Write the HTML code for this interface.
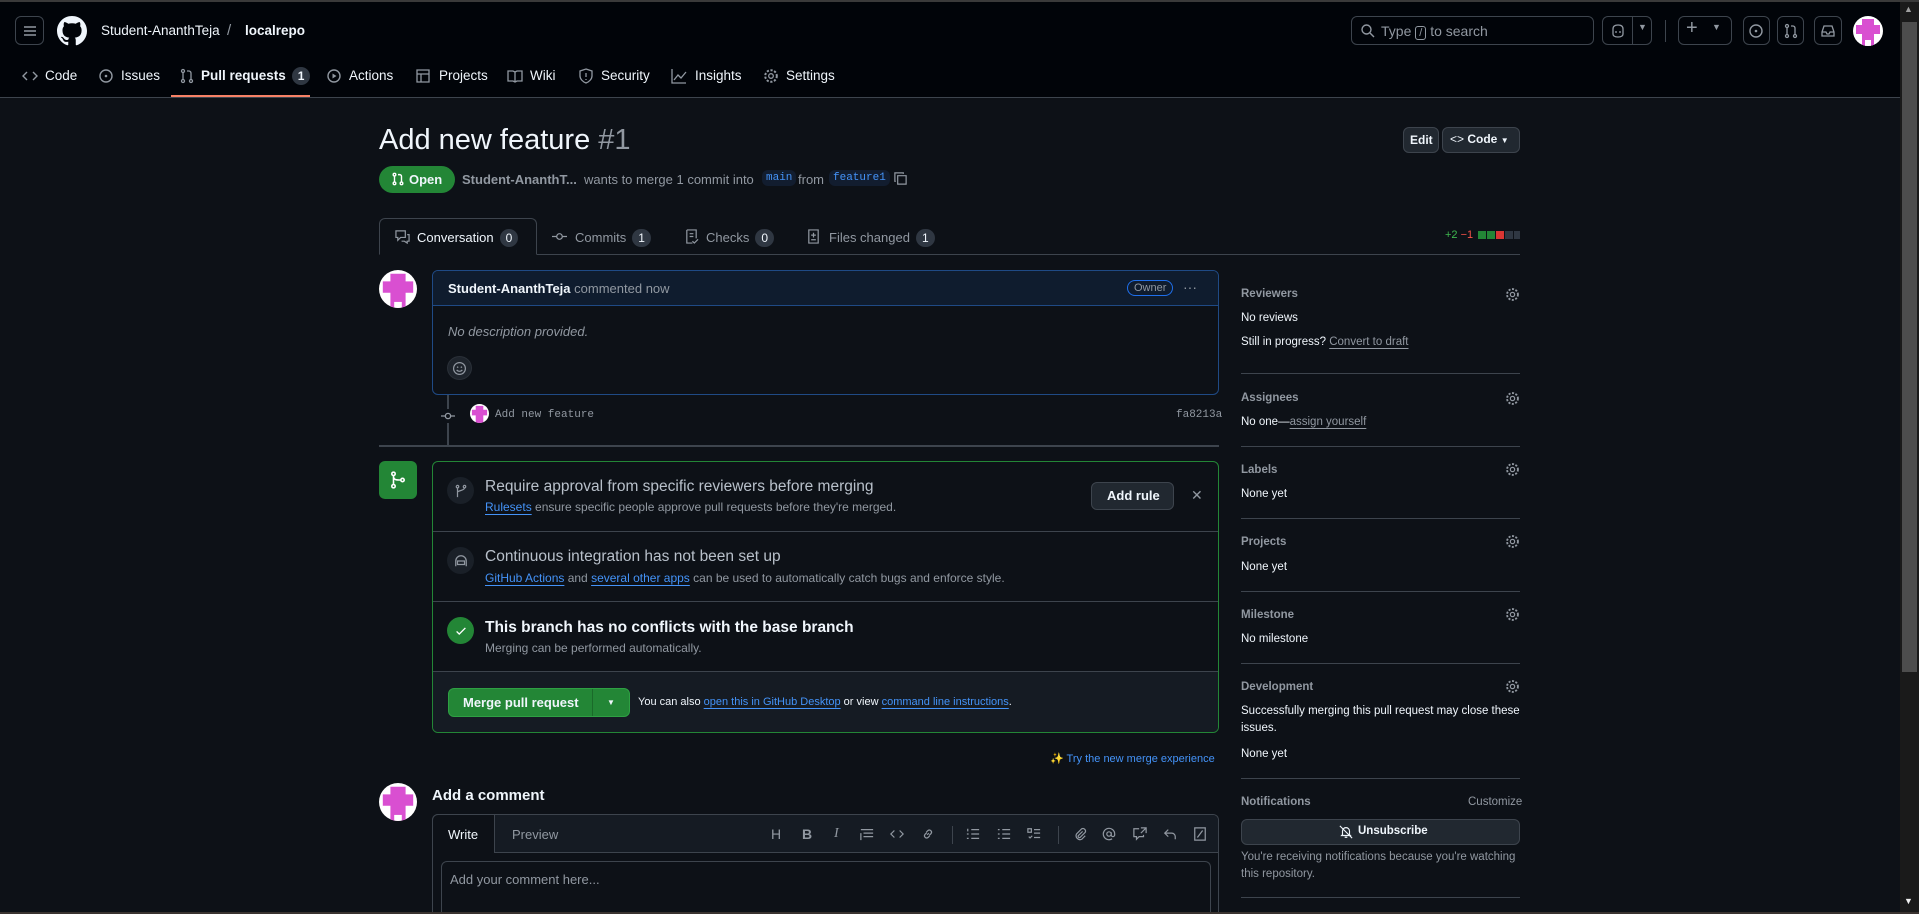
<!DOCTYPE html>
<html style="overflow:hidden;width:1919px;height:914px"><head><meta charset="utf-8"><style>
*{box-sizing:border-box;margin:0;padding:0}
body{width:1919px;height:914px;overflow:hidden;background:#0d1117;font-family:"Liberation Sans",sans-serif;color:#f0f6fc;font-size:14px;position:relative}
.a{position:absolute;white-space:nowrap}
.m{color:#9198a1}
.l{color:#4493f8}
.u{text-decoration:underline;text-underline-offset:3px}
.btn{position:absolute;border:1px solid #3d444d;border-radius:6px;background:#212830}
.hb{position:absolute;border:1px solid #3d444d;border-radius:6px}
.cnt{display:inline-block;background:#2f3742;border-radius:10px;padding:0 6px;font-size:12px;line-height:18px;margin-left:6px;color:#f0f6fc}
svg{position:absolute}
.av{position:absolute;border-radius:50%;background:#fff;overflow:hidden}
.hr{position:absolute;height:1px;background:#3d444d}
.st{font-size:11.5px}
.n{font-size:13.5px}
</style></head><body>
<div class="a" style="left:0;top:0;width:1919px;height:98px;background:#010409;border-top:2px solid #3a3a3a;border-bottom:1px solid #3d444d"></div>
<div class="hb" style="left:15px;top:16px;width:29px;height:29px"></div>
<svg style="left:22px;top:23px" width="16" height="16" viewBox="0 0 16 16"><path d="M2 4h12M2 8h12M2 12h12" stroke="#9198a1" stroke-width="1.5"/></svg>
<svg style="left:57px;top:16px" width="30" height="30" viewBox="0 0 16 16"><path fill="#f0f6fc" d="M8 0C3.58 0 0 3.58 0 8c0 3.54 2.29 6.530 5.47 7.59.4.07.55-.17.55-.38 0-.19-.01-.82-.01-1.49-2.01.37-2.53-.49-2.69-.94-.09-.23-.48-.94-.82-1.130-.28-.15-.68-.52-.01-.53.63-.01 1.08.58 1.230.82.72 1.21 1.87.87 2.33.66.07-.52.28-.87.51-1.070-1.78-.2-3.64-.89-3.64-3.95 0-.87.31-1.59.82-2.15-.08-.2-.36-1.02.08-2.12 0 0 .67-.21 2.2.82.64-.18 1.32-.27 2-.27.68 0 1.36.09 2 .27 1.53-1.04 2.2-.82 2.2-.82.44 1.1.16 1.92.08 2.12.51.56.82 1.27.82 2.15 0 3.07-1.87 3.75-3.65 3.95.29.25.54.73.54 1.48 0 1.07-.01 1.93-.01 2.2 0 .21.15.46.55.38A8.013 8.013 0 0016 8c0-4.42-3.58-8-8-8z"/></svg>
<div class="a" style="left:101px;top:23px;font-size:13.5px">Student-AnanthTeja</div>
<div class="a m" style="left:227px;top:22px;font-size:15px">/</div>
<div class="a" style="left:245px;top:23px;font-weight:bold;font-size:13.5px">localrepo</div>
<div class="hb" style="left:1351px;top:16px;width:243px;height:29px"></div>
<svg style="left:1360px;top:23px" width="16" height="16" viewBox="0 0 16 16"><circle cx="6.5" cy="6.5" r="4.5" stroke="#9198a1" stroke-width="1.4" fill="none"/><path d="M10 10l4 4" stroke="#9198a1" stroke-width="1.4"/></svg>
<div class="a m" style="left:1381px;top:23px;font-size:14px">Type <span style="border:1px solid #9198a1;border-radius:3px;padding:0 3px;font-size:11px">/</span> to search</div>
<div class="hb" style="left:1602px;top:16px;width:50px;height:29px"></div>
<div class="a" style="left:1632px;top:17px;width:1px;height:27px;background:#3d444d"></div>
<svg style="left:1610px;top:23px" width="16" height="16" viewBox="0 0 16 16"><path d="M3 6c0-3 2-4 5-4s5 1 5 4v5c0 2-2 3-5 3s-5-1-5-3z M6 8v2M10 8v2" stroke="#9198a1" stroke-width="1.3" fill="none"/></svg>
<div class="a m" style="left:1638px;top:22px;font-size:9px">▼</div>
<div class="a" style="left:1665px;top:20px;width:1px;height:22px;background:#3d444d"></div>
<div class="hb" style="left:1678px;top:16px;width:54px;height:29px"></div>
<div class="a m" style="left:1686px;top:17px;font-size:20px">+</div>
<div class="a m" style="left:1712px;top:22px;font-size:9px">▼</div>
<div class="hb" style="left:1743px;top:16px;width:27px;height:29px"></div>
<svg style="left:1748px;top:23px" width="16" height="16" viewBox="0 0 16 16"><circle cx="8" cy="8" r="6" stroke="#9198a1" stroke-width="1.4" fill="none"/><circle cx="8" cy="8" r="1.3" fill="#9198a1"/></svg>
<div class="hb" style="left:1777px;top:16px;width:27px;height:29px"></div>
<svg style="left:1783px;top:23px" width="16" height="16" viewBox="0 0 16 16"><g stroke="#9198a1" stroke-width="1.3" fill="none"><circle cx="4" cy="3" r="1.5"/><circle cx="4" cy="13" r="1.5"/><circle cx="12" cy="13" r="1.5"/><path d="M4 4.5v7M12 11.5V5c0-1-1-2-2-2H8"/></g></svg>
<div class="hb" style="left:1814px;top:16px;width:28px;height:29px"></div>
<svg style="left:1820px;top:23px" width="16" height="16" viewBox="0 0 16 16"><path d="M2 9l2-6h8l2 6v4H2zM2 9h4l1 2h2l1-2h4" stroke="#9198a1" stroke-width="1.3" fill="none"/></svg>
<div class="av" style="left:1853px;top:16px;width:30px;height:30px"><svg style="left:0;top:0" width="30" height="30" viewBox="0 0 10 10"><path d="M3 1h4v2h2v3H7v4H3V6H1V3h2z" fill="#d94fd1"/><rect x="4" y="8" width="2" height="2" fill="#fff"/></svg></div>
<svg style="left:22px;top:68px" width="16" height="16" viewBox="0 0 16 16"><path d="M5 4L1 8l4 4M11 4l4 4-4 4" stroke="#9198a1" stroke-width="1.4" fill="none"/></svg>
<div class="a n" style="left:45px;top:68px">Code</div>
<svg style="left:98px;top:68px" width="16" height="16" viewBox="0 0 16 16"><circle cx="8" cy="8" r="6" stroke="#9198a1" stroke-width="1.4" fill="none"/><circle cx="8" cy="8" r="1.3" fill="#9198a1"/></svg>
<div class="a n" style="left:121px;top:68px">Issues</div>
<svg style="left:179px;top:68px" width="16" height="16" viewBox="0 0 16 16"><g stroke="#9198a1" stroke-width="1.3" fill="none"><circle cx="4" cy="3" r="1.5"/><circle cx="4" cy="13" r="1.5"/><circle cx="12" cy="13" r="1.5"/><path d="M4 4.5v7M12 11.5V5c0-1-1-2-2-2H8"/></g></svg>
<div class="a n" style="left:201px;top:67px;font-weight:bold">Pull requests<span class="cnt">1</span></div>
<div class="a" style="left:171px;top:95px;width:139px;height:2px;background:#f78166"></div>
<svg style="left:326px;top:68px" width="16" height="16" viewBox="0 0 16 16"><circle cx="8" cy="8" r="6" stroke="#9198a1" stroke-width="1.4" fill="none"/><path d="M6.5 5.5v5l4-2.5z" fill="#9198a1"/></svg>
<div class="a n" style="left:349px;top:68px">Actions</div>
<svg style="left:415px;top:68px" width="16" height="16" viewBox="0 0 16 16"><path d="M2 2h12v12H2zM2 6h12M6 6v8" stroke="#9198a1" stroke-width="1.3" fill="none"/></svg>
<div class="a n" style="left:439px;top:68px">Projects</div>
<svg style="left:507px;top:68px" width="16" height="16" viewBox="0 0 16 16"><path d="M1 3h5l2 1 2-1h5v10h-5l-2 1-2-1H1zM8 4v10" stroke="#9198a1" stroke-width="1.3" fill="none"/></svg>
<div class="a n" style="left:530px;top:68px">Wiki</div>
<svg style="left:578px;top:68px" width="16" height="16" viewBox="0 0 16 16"><path d="M8 1l6 2v5c0 3-3 6-6 7-3-1-6-4-6-7V3zM8 5v4M8 11v1" stroke="#9198a1" stroke-width="1.3" fill="none"/></svg>
<div class="a n" style="left:601px;top:68px">Security</div>
<svg style="left:671px;top:68px" width="16" height="16" viewBox="0 0 16 16"><path d="M1 1v14h14M3 12l4-5 3 3 5-6" stroke="#9198a1" stroke-width="1.3" fill="none"/></svg>
<div class="a n" style="left:695px;top:68px">Insights</div>
<svg style="left:763px;top:68px" width="16" height="16" viewBox="0 0 16 16"><circle cx="8" cy="8" r="2.3" stroke="#9198a1" stroke-width="1.3" fill="none"/><circle cx="8" cy="8" r="5.8" stroke="#9198a1" stroke-width="2" stroke-dasharray="2.2 1.6" fill="none"/></svg>
<div class="a n" style="left:786px;top:68px">Settings</div>
<div class="a" style="left:1900px;top:2px;width:19px;height:910px;background:#1a1a1a"></div>
<div class="a" style="left:1902px;top:22px;width:15px;height:650px;background:#4d4d4d"></div>
<div class="a" style="left:1904px;top:4px;font-size:9px;color:#a0a0a0">▲</div>
<div class="a" style="left:1904px;top:896px;font-size:9px;color:#f0f0f0">▼</div>
<div class="a" style="left:379px;top:124px;font-size:29px">Add new feature <span class="m" style="font-weight:300">#1</span></div>
<div class="btn" style="left:1403px;top:127px;width:36px;height:26px"></div>
<div class="a" style="left:1410px;top:133px;font-size:12px;font-weight:bold">Edit</div>
<div class="btn" style="left:1442px;top:127px;width:78px;height:26px"></div>
<div class="a" style="left:1450px;top:132px;font-size:12px;font-weight:bold"><span style="font-weight:normal">&lt;&gt;</span> Code <span style="font-size:8px">▼</span></div>
<div class="a" style="left:379px;top:166px;width:76px;height:27px;background:#238636;border-radius:14px"></div>
<svg style="left:391px;top:172px" width="14" height="14" viewBox="0 0 16 16"><g stroke="#fff" stroke-width="1.6" fill="none"><circle cx="4" cy="3" r="1.5"/><circle cx="4" cy="13" r="1.5"/><circle cx="12" cy="13" r="1.5"/><path d="M4 4.5v7M12 11.5V5c0-1-1-2-2-2H8"/></g></svg>
<div class="a" style="left:409px;top:172px;font-weight:bold;font-size:13px">Open</div>
<div class="a m" style="left:462px;top:172px;font-size:13px"><b>Student-AnanthT...</b></div>
<div class="a m" style="left:584px;top:172px;font-size:13px">wants to merge 1 commit into</div>
<div class="a l" style="left:762px;top:170px;padding:2px 4px;background:#121d2f;border-radius:6px;font-family:'Liberation Mono',monospace;font-size:11px">main</div>
<div class="a m" style="left:798px;top:172px;font-size:13px">from</div>
<div class="a l" style="left:829px;top:170px;padding:2px 4px;background:#121d2f;border-radius:6px;font-family:'Liberation Mono',monospace;font-size:11px">feature1</div>
<svg style="left:893px;top:171px" width="15" height="15" viewBox="0 0 16 16"><path d="M5 5h9v9H5zM3 11H2V2h9v1" stroke="#9198a1" stroke-width="1.3" fill="none"/></svg>
<div class="hr" style="left:379px;top:254px;width:1141px"></div>
<div class="a" style="left:379px;top:218px;width:158px;height:37px;border:1px solid #3d444d;border-bottom:1px solid #0d1117;border-radius:6px 6px 0 0;background:#0d1117"></div>
<svg style="left:395px;top:229px" width="15" height="15" viewBox="0 0 16 16"><path d="M1 2h10v7H6l-3 3V9H1zM13 6h2v7h-2v2l-3-2H7" stroke="#9198a1" stroke-width="1.3" fill="none"/></svg>
<div class="a" style="left:417px;top:229px;font-size:13px">Conversation<span class="cnt">0</span></div>
<svg style="left:552px;top:229px" width="15" height="15" viewBox="0 0 16 16"><circle cx="8" cy="8" r="3" stroke="#9198a1" stroke-width="1.3" fill="none"/><path d="M0 8h5M11 8h5" stroke="#9198a1" stroke-width="1.3"/></svg>
<div class="a m" style="left:575px;top:229px;font-size:13px">Commits<span class="cnt m">1</span></div>
<svg style="left:684px;top:229px" width="15" height="15" viewBox="0 0 16 16"><path d="M3 1h10v9M3 1v14h6M6 5h4M6 8h4M9 13l2 2 4-4" stroke="#9198a1" stroke-width="1.3" fill="none"/></svg>
<div class="a m" style="left:706px;top:229px;font-size:13px">Checks<span class="cnt m">0</span></div>
<svg style="left:806px;top:229px" width="15" height="15" viewBox="0 0 16 16"><path d="M3 1h10v14H3zM8 4v5M5.5 6.5h5M5.5 11.5h5" stroke="#9198a1" stroke-width="1.3" fill="none"/></svg>
<div class="a m" style="left:829px;top:229px;font-size:13px">Files changed<span class="cnt m">1</span></div>
<div class="a" style="left:1445px;top:229px;font-size:11px"><span style="color:#3fb950">+2</span> <span style="color:#f85149">−1</span></div>
<div class="a" style="left:1478px;top:231px;width:8px;height:8px;background:#238636"></div>
<div class="a" style="left:1487px;top:231px;width:8px;height:8px;background:#238636"></div>
<div class="a" style="left:1496px;top:231px;width:8px;height:8px;background:#da3633"></div>
<div class="a" style="left:1505px;top:231px;width:8px;height:8px;background:#2f3742"></div>
<div class="a" style="left:1514px;top:231px;width:6px;height:8px;background:#2f3742"></div>
<div class="av" style="left:379px;top:270px;width:38px;height:38px"><svg style="left:0;top:0" width="38" height="38" viewBox="0 0 10 10"><path d="M3 1h4v2h2v3H7v4H3V6H1V3h2z" fill="#d94fd1"/><rect x="4" y="8.4" width="2" height="2" fill="#fff"/></svg></div>
<div class="a" style="left:432px;top:270px;width:787px;height:125px;border:1px solid #1f4a85;border-radius:6px;overflow:hidden">
<div style="height:35px;background:#0f1c2e;border-bottom:1px solid #1f4a85"></div></div>
<div class="a" style="left:448px;top:281px;font-size:13px"><b>Student-AnanthTeja</b> <span class="m">commented now</span></div>
<div class="a m" style="left:1127px;top:280px;font-size:11px;border:1px solid #1f6feb;border-radius:10px;padding:1px 6px">Owner</div>
<div class="a m" style="left:1183px;top:279px;font-size:14px">···</div>
<div class="a m" style="left:448px;top:324px;font-size:13px;font-style:italic">No description provided.</div>
<div class="a" style="left:447px;top:356px;width:25px;height:24px;border-radius:50%;background:#1e242c;border:1px solid #2a3038"></div>
<svg style="left:452px;top:361px" width="15" height="15" viewBox="0 0 16 16"><circle cx="8" cy="8" r="6.3" stroke="#9198a1" stroke-width="1.3" fill="none"/><path d="M5 9.5c1.5 2 4.5 2 6 0" stroke="#9198a1" stroke-width="1.3" fill="none"/><circle cx="6" cy="6.5" r=".8" fill="#9198a1"/><circle cx="10" cy="6.5" r=".8" fill="#9198a1"/></svg>
<div class="a" style="left:447px;top:395px;width:2px;height:51px;background:#3d444d"></div>
<div class="a" style="left:441px;top:409px;width:14px;height:14px;background:#0d1117"></div>
<svg style="left:441px;top:409px" width="14" height="14" viewBox="0 0 16 16"><circle cx="8" cy="8" r="3" stroke="#9198a1" stroke-width="1.5" fill="none"/><path d="M0 8h5M11 8h5" stroke="#9198a1" stroke-width="1.5"/></svg>
<div class="av" style="left:470px;top:404px;width:19px;height:19px"><svg style="left:0;top:0" width="19" height="19" viewBox="0 0 10 10"><path d="M3 1h4v2h2v3H7v4H3V6H1V3h2z" fill="#d94fd1"/></svg></div>
<div class="a m" style="left:495px;top:409px;font-family:'Liberation Mono',monospace;font-size:11px">Add new feature</div>
<div class="a m" style="left:1176px;top:409px;font-family:'Liberation Mono',monospace;font-size:11px">fa8213a</div>
<div class="hr" style="left:379px;top:445px;width:840px;height:2px"></div>
<div class="a" style="left:379px;top:461px;width:38px;height:38px;background:#238636;border-radius:6px"></div>
<svg style="left:389px;top:471px" width="18" height="18" viewBox="0 0 16 16"><g stroke="#fff" stroke-width="1.4" fill="none"><circle cx="4" cy="2.5" r="1.5"/><circle cx="4" cy="13.5" r="1.5"/><circle cx="12" cy="8" r="1.5"/><path d="M4 4v8M4 5c0 3 3 3 6.5 3"/></g></svg>
<div class="a" style="left:432px;top:461px;width:787px;height:272px;border:1px solid #238636;border-radius:6px;overflow:hidden">
<div style="height:70px;border-bottom:1px solid #3d444d"></div>
<div style="height:70px;border-bottom:1px solid #3d444d"></div>
<div style="height:70px;border-bottom:1px solid #3d444d"></div>
<div style="height:70px;background:#151b23"></div></div>
<div class="a" style="left:447px;top:477px;width:27px;height:27px;border-radius:50%;background:#1a2028"></div>
<svg style="left:454px;top:484px" width="14" height="14" viewBox="0 0 16 16"><g stroke="#9198a1" stroke-width="1.4" fill="none"><circle cx="4" cy="3" r="1.4"/><circle cx="12" cy="3" r="1.4"/><path d="M4 4.5V15M12 4.5c0 3-8 3-8 5"/></g></svg>
<div class="a" style="left:485px;top:478px;font-size:15.5px;color:#b8c0ca">Require approval from specific reviewers before merging</div>
<div class="a m" style="left:485px;top:500px;font-size:12px"><span class="l u">Rulesets</span> ensure specific people approve pull requests before they're merged.</div>
<div class="btn" style="left:1091px;top:482px;width:83px;height:28px"></div>
<div class="a" style="left:1107px;top:488px;font-size:13px;font-weight:bold">Add rule</div>
<div class="a m" style="left:1191px;top:487px;font-size:14px">✕</div>
<div class="a" style="left:447px;top:547px;width:27px;height:27px;border-radius:50%;background:#1a2028"></div>
<svg style="left:454px;top:554px" width="14" height="14" viewBox="0 0 16 16"><path d="M2 14V8a6 6 0 0112 0v6M4 8h8v4H4zM6 10h.1M10 10h.1" stroke="#9198a1" stroke-width="1.4" fill="none"/></svg>
<div class="a" style="left:485px;top:548px;font-size:15.5px;color:#b8c0ca">Continuous integration has not been set up</div>
<div class="a m" style="left:485px;top:571px;font-size:12px"><span class="l u">GitHub Actions</span> and <span class="l u">several other apps</span> can be used to automatically catch bugs and enforce style.</div>
<div class="a" style="left:447px;top:617px;width:27px;height:27px;border-radius:50%;background:#238636"></div>
<svg style="left:454px;top:624px" width="14" height="14" viewBox="0 0 16 16"><path d="M3 8.5l3 3 7-7" stroke="#fff" stroke-width="1.6" fill="none"/></svg>
<div class="a" style="left:485px;top:619px;font-size:15.5px;font-weight:bold">This branch has no conflicts with the base branch</div>
<div class="a m" style="left:485px;top:641px;font-size:12px">Merging can be performed automatically.</div>
<div class="a" style="left:448px;top:688px;width:182px;height:29px;background:#238636;border-radius:6px;border:1px solid #2ea043"></div>
<div class="a" style="left:592px;top:689px;width:1px;height:27px;background:#1a6a2a"></div>
<div class="a" style="left:463px;top:695px;font-size:13px;font-weight:bold">Merge pull request</div>
<div class="a" style="left:607px;top:698px;font-size:8px">▼</div>
<div class="a" style="left:638px;top:696px;font-size:11px">You can also <span class="l u">open this in GitHub Desktop</span> or view <span class="l u">command line instructions</span>.</div>
<div class="a l" style="left:1050px;top:752px;font-size:11px"><span style="color:#e3b341">✨</span> Try the new merge experience</div>
<div class="av" style="left:379px;top:783px;width:38px;height:38px"><svg style="left:0;top:0" width="38" height="38" viewBox="0 0 10 10"><path d="M3 1h4v2h2v3H7v4H3V6H1V3h2z" fill="#d94fd1"/><rect x="4" y="8.4" width="2" height="2" fill="#fff"/></svg></div>
<div class="a" style="left:432px;top:787px;font-size:15px;font-weight:bold">Add a comment</div>
<div class="a" style="left:432px;top:814px;width:787px;height:100px;border:1px solid #3d444d;border-bottom:none;border-radius:6px 6px 0 0;overflow:hidden;background:#0d1117"><div style="height:38px;background:#151b23;border-bottom:1px solid #3d444d"></div></div>
<div class="a" style="left:432px;top:814px;width:63px;height:39px;border:1px solid #3d444d;border-bottom:none;border-radius:6px 0 0 0;background:#0d1117"></div>
<div class="a" style="left:448px;top:827px;font-size:13px">Write</div>
<div class="a m" style="left:512px;top:827px;font-size:13px">Preview</div>
<div class="a m" style="left:771px;top:826px;font-size:14px">H</div>
<div class="a m" style="left:802px;top:826px;font-size:14px;font-weight:bold">B</div>
<div class="a m" style="left:834px;top:826px;font-size:14px;font-style:italic;font-family:'Liberation Serif',serif">I</div>
<svg style="left:860px;top:827px" width="14" height="14" viewBox="0 0 16 16"><path d="M1 3h14M4 7h11M4 11h11M1 7v8" stroke="#9198a1" stroke-width="1.4" fill="none"/></svg>
<svg style="left:890px;top:827px" width="14" height="14" viewBox="0 0 16 16"><path d="M5 4L1 8l4 4M11 4l4 4-4 4" stroke="#9198a1" stroke-width="1.4" fill="none"/></svg>
<svg style="left:921px;top:827px" width="14" height="14" viewBox="0 0 16 16"><path d="M7 9l2-2M6 6l2-2a2.5 2.5 0 013.5 3.5l-2 2M10 10l-2 2a2.5 2.5 0 01-3.5-3.5l2-2" stroke="#9198a1" stroke-width="1.4" fill="none"/></svg>
<div class="a" style="left:952px;top:826px;width:1px;height:18px;background:#3d444d"></div>
<svg style="left:966px;top:827px" width="14" height="14" viewBox="0 0 16 16"><path d="M6 3h9M6 8h9M6 13h9M2 2v3M1 8h2M1 13h2" stroke="#9198a1" stroke-width="1.4" fill="none"/></svg>
<svg style="left:997px;top:827px" width="14" height="14" viewBox="0 0 16 16"><path d="M6 3h9M6 8h9M6 13h9M1 3h2M1 8h2M1 13h2" stroke="#9198a1" stroke-width="1.4" fill="none"/></svg>
<svg style="left:1027px;top:827px" width="14" height="14" viewBox="0 0 16 16"><path d="M1 2h4v4H1zM8 3h7M8 7h7M2 11l1.5 1.5L6 10M8 12h7" stroke="#9198a1" stroke-width="1.4" fill="none"/></svg>
<div class="a" style="left:1058px;top:826px;width:1px;height:18px;background:#3d444d"></div>
<svg style="left:1073px;top:827px" width="14" height="14" viewBox="0 0 16 16"><path d="M11 5l-5 5a1.5 1.5 0 002 2l6-6a3 3 0 00-4-4L4 8a4.5 4.5 0 006 6l4-4" stroke="#9198a1" stroke-width="1.4" fill="none"/></svg>
<svg style="left:1102px;top:827px" width="14" height="14" viewBox="0 0 16 16"><circle cx="8" cy="8" r="2.5" stroke="#9198a1" stroke-width="1.4" fill="none"/><path d="M10.5 6v3a2 2 0 004 0V8a6.5 6.5 0 10-3 5.5" stroke="#9198a1" stroke-width="1.4" fill="none"/></svg>
<svg style="left:1133px;top:827px" width="14" height="14" viewBox="0 0 16 16"><path d="M9 1h6v6M15 1l-6 6M7 2H1v9h3v3l3-3h5V9" stroke="#9198a1" stroke-width="1.4" fill="none"/></svg>
<svg style="left:1163px;top:827px" width="14" height="14" viewBox="0 0 16 16"><path d="M6 3L2 7l4 4M2 7h8a4 4 0 014 4v3" stroke="#9198a1" stroke-width="1.4" fill="none"/></svg>
<svg style="left:1193px;top:827px" width="14" height="14" viewBox="0 0 16 16"><path d="M2 1h12v14H2zM11 4l-6 8" stroke="#9198a1" stroke-width="1.4" fill="none"/></svg>
<div class="a" style="left:441px;top:861px;width:770px;height:53px;border:1px solid #3d444d;border-bottom:none;border-radius:6px 6px 0 0;background:#0d1117"></div>
<div class="a m" style="left:450px;top:872px;font-size:13px">Add your comment here...</div>
<div class="a m st" style="left:1241px;top:288px;font-weight:bold">Reviewers</div>
<div class="a st" style="left:1241px;top:312px">No reviews</div>
<div class="a st" style="left:1241px;top:336px">Still in progress? <span class="m u">Convert to draft</span></div>
<div class="hr" style="left:1241px;top:373px;width:279px"></div>
<div class="a m st" style="left:1241px;top:392px;font-weight:bold">Assignees</div>
<div class="a st" style="left:1241px;top:416px">No one—<span class="m u">assign yourself</span></div>
<div class="hr" style="left:1241px;top:446px;width:279px"></div>
<div class="a m st" style="left:1241px;top:464px;font-weight:bold">Labels</div>
<div class="a st" style="left:1241px;top:488px">None yet</div>
<div class="hr" style="left:1241px;top:518px;width:279px"></div>
<div class="a m st" style="left:1241px;top:536px;font-weight:bold">Projects</div>
<div class="a st" style="left:1241px;top:561px">None yet</div>
<div class="hr" style="left:1241px;top:591px;width:279px"></div>
<div class="a m st" style="left:1241px;top:609px;font-weight:bold">Milestone</div>
<div class="a st" style="left:1241px;top:633px">No milestone</div>
<div class="hr" style="left:1241px;top:663px;width:279px"></div>
<div class="a m st" style="left:1241px;top:681px;font-weight:bold">Development</div>
<div class="a st" style="left:1241px;top:705px">Successfully merging this pull request may close these</div>
<div class="a st" style="left:1241px;top:722px">issues.</div>
<div class="a st" style="left:1241px;top:748px">None yet</div>
<div class="hr" style="left:1241px;top:778px;width:279px"></div>
<div class="a m st" style="left:1241px;top:796px;font-weight:bold">Notifications</div>
<div class="a m st" style="left:1468px;top:796px">Customize</div>
<div class="btn" style="left:1241px;top:819px;width:279px;height:26px"></div>
<svg style="left:1339px;top:825px" width="14" height="14" viewBox="0 0 16 16"><path d="M4 11V7a4 4 0 018 0v4l1 1H3zM6.5 14h3M1 1l14 14" stroke="#f0f6fc" stroke-width="1.3" fill="none"/></svg>
<div class="a st" style="left:1358px;top:825px;font-weight:bold">Unsubscribe</div>
<div class="a m st" style="left:1241px;top:851px">You're receiving notifications because you're watching</div>
<div class="a m st" style="left:1241px;top:868px">this repository.</div>
<div class="hr" style="left:1241px;top:897px;width:279px"></div>
<svg style="left:1505px;top:287px" width="15" height="15" viewBox="0 0 16 16"><circle cx="8" cy="8" r="2.3" stroke="#9198a1" stroke-width="1.3" fill="none"/><circle cx="8" cy="8" r="5.8" stroke="#9198a1" stroke-width="2" stroke-dasharray="2.2 1.6" fill="none"/></svg>
<svg style="left:1505px;top:391px" width="15" height="15" viewBox="0 0 16 16"><circle cx="8" cy="8" r="2.3" stroke="#9198a1" stroke-width="1.3" fill="none"/><circle cx="8" cy="8" r="5.8" stroke="#9198a1" stroke-width="2" stroke-dasharray="2.2 1.6" fill="none"/></svg>
<svg style="left:1505px;top:462px" width="15" height="15" viewBox="0 0 16 16"><circle cx="8" cy="8" r="2.3" stroke="#9198a1" stroke-width="1.3" fill="none"/><circle cx="8" cy="8" r="5.8" stroke="#9198a1" stroke-width="2" stroke-dasharray="2.2 1.6" fill="none"/></svg>
<svg style="left:1505px;top:534px" width="15" height="15" viewBox="0 0 16 16"><circle cx="8" cy="8" r="2.3" stroke="#9198a1" stroke-width="1.3" fill="none"/><circle cx="8" cy="8" r="5.8" stroke="#9198a1" stroke-width="2" stroke-dasharray="2.2 1.6" fill="none"/></svg>
<svg style="left:1505px;top:607px" width="15" height="15" viewBox="0 0 16 16"><circle cx="8" cy="8" r="2.3" stroke="#9198a1" stroke-width="1.3" fill="none"/><circle cx="8" cy="8" r="5.8" stroke="#9198a1" stroke-width="2" stroke-dasharray="2.2 1.6" fill="none"/></svg>
<svg style="left:1505px;top:679px" width="15" height="15" viewBox="0 0 16 16"><circle cx="8" cy="8" r="2.3" stroke="#9198a1" stroke-width="1.3" fill="none"/><circle cx="8" cy="8" r="5.8" stroke="#9198a1" stroke-width="2" stroke-dasharray="2.2 1.6" fill="none"/></svg>
<div class="a" style="left:0;top:912px;width:1919px;height:2px;background:#3a3330"></div>
</body></html>
